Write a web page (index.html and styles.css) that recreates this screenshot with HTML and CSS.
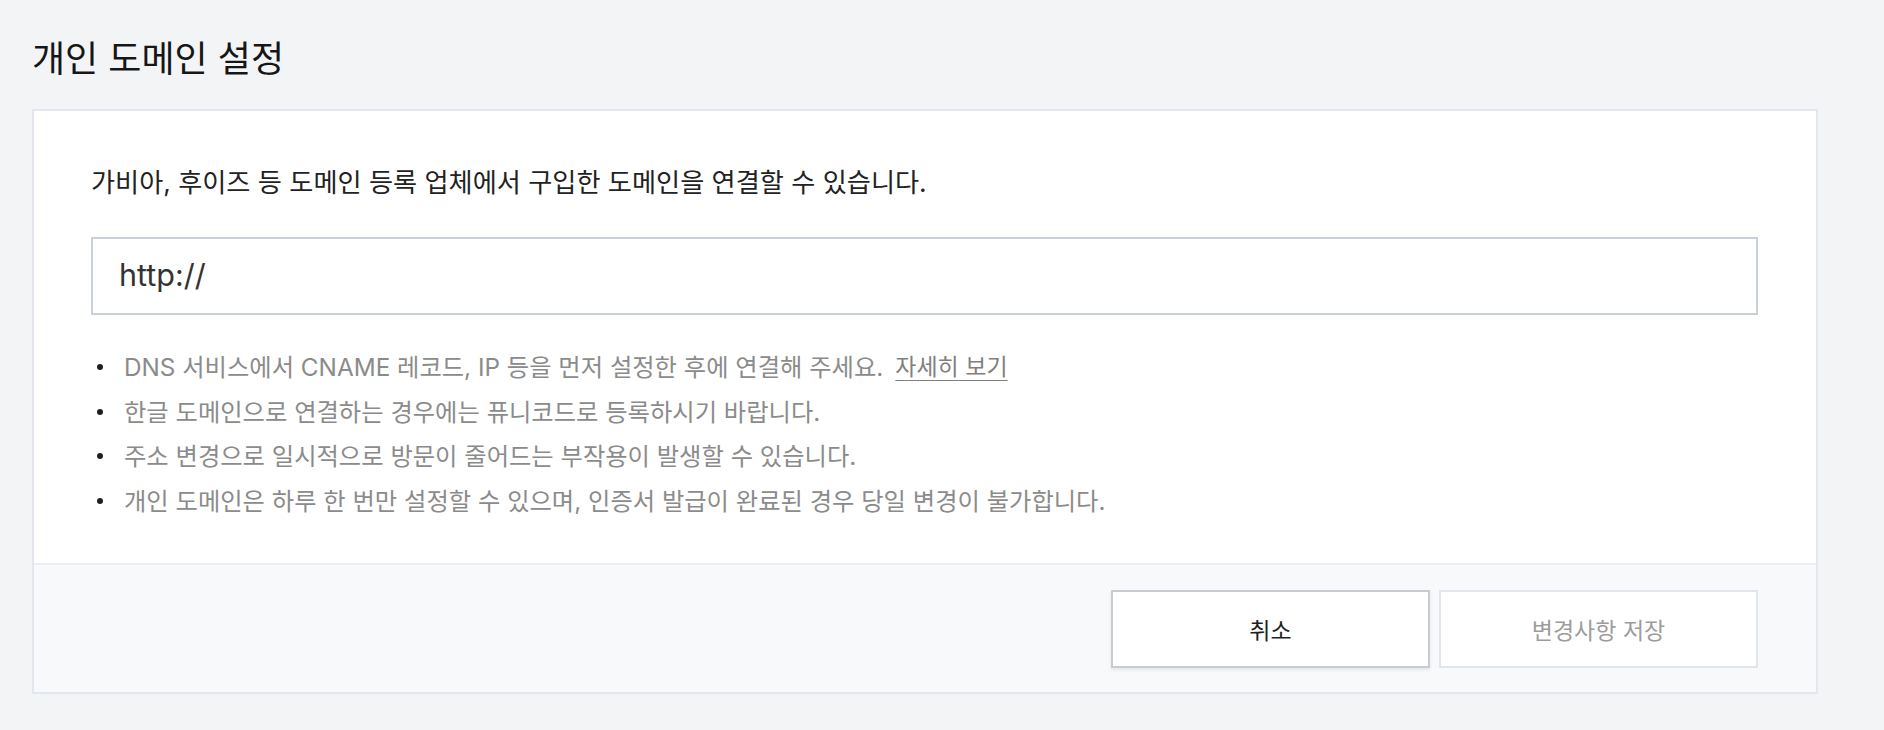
FILE: index.html
```html
<!DOCTYPE html>
<html lang="ko">
<head>
<meta charset="utf-8">
<title>개인 도메인 설정</title>
<link rel="stylesheet" href="styles.css">
</head>
<body>
<div class="page">
  <h1 class="title">개인 도메인 설정</h1>
  <section class="card">
    <div class="card-body">
      <p class="desc">가비아, 후이즈 등 도메인 등록 업체에서 구입한 도메인을 연결할 수 있습니다.</p>
      <input class="domain-input" type="text" value="http://">
      <ul class="notes">
        <li><span class="dot"></span><span>DNS 서비스에서 CNAME 레코드, IP 등을 먼저 설정한 후에 연결해 주세요.</span><a class="more" href="#">자세히 보기</a></li>
        <li><span class="dot"></span><span>한글 도메인으로 연결하는 경우에는 퓨니코드로 등록하시기 바랍니다.</span></li>
        <li><span class="dot"></span><span>주소 변경으로 일시적으로 방문이 줄어드는 부작용이 발생할 수 있습니다.</span></li>
        <li><span class="dot"></span><span>개인 도메인은 하루 한 번만 설정할 수 있으며, 인증서 발급이 완료된 경우 당일 변경이 불가합니다.</span></li>
      </ul>
    </div>
    <div class="card-footer">
      <button class="btn btn-cancel" type="button">취소</button>
      <button class="btn btn-save" type="button">변경사항 저장</button>
    </div>
  </section>
</div>
</body>
</html>
```
FILE: styles.css
```css
* { box-sizing: border-box; }

html, body {
  margin: 0;
  padding: 0;
  background: #f3f4f6;
  font-family: Inter, "Noto Sans CJK KR", sans-serif;
}

.page {
  padding: 40px 66px 0 32px;
}

.title {
  margin: 0 0 31px;
  font-size: 36px;
  line-height: 38px;
  font-weight: 400;
  color: #161616;
}

.card {
  background: #ffffff;
  border: 2px solid #e2e6ee;
}

.card-body {
  padding: 59px 58px 40px 57px;
}

.desc {
  margin: 0 0 41px;
  font-size: 26.2px;
  line-height: 26px;
  color: #222222;
}

.domain-input {
  display: block;
  width: 100%;
  height: 78px;
  margin: 0;
  padding: 0 26px 3px;
  border: 2px solid #c9d0db;
  border-radius: 0;
  background: #ffffff;
  font-family: Inter, "Noto Sans CJK KR", sans-serif;
  font-size: 30.5px;
  color: #333333;
  outline: none;
}

.notes {
  list-style: none;
  margin: 30px 0 0;
  padding: 0;
  font-size: 24.3px;
  line-height: 44.5px;
  color: #8b8b8b;
}

.notes li {
  display: flex;
  align-items: center;
}

.dot {
  flex: none;
  width: 6px;
  height: 6px;
  margin: 0 21px 0 6px;
  border-radius: 50%;
  background: #1f1f1f;
}

.more {
  margin-left: 12px;
  font-size: 23px;
  color: #808080;
  text-decoration: underline;
  text-decoration-thickness: 1px;
  text-underline-offset: 5px;
}

.card-footer {
  display: flex;
  justify-content: flex-end;
  gap: 9px;
  padding: 25px 58px 24px 57px;
  border-top: 2px solid #eceef2;
  background: #f8f9fb;
}

.btn {
  width: 319px;
  height: 78px;
  margin: 0;
  padding: 0;
  background: #ffffff;
  font-family: Inter, "Noto Sans CJK KR", sans-serif;
  font-size: 23px;
  border-radius: 0;
  cursor: pointer;
}

.btn-cancel {
  border: 2px solid #c6cbd4;
  color: #1f1f1f;
  box-shadow: 0 2px 3px rgba(0, 0, 0, 0.08);
}

.btn-save {
  border: 2px solid #e1e5ee;
  color: #9c9c9c;
}
```
